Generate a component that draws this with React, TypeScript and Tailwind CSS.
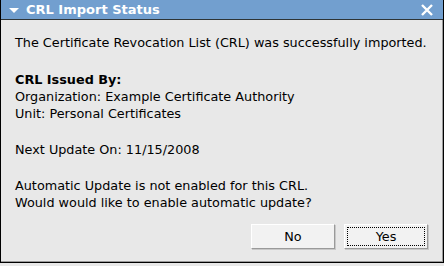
import { FC } from 'react';

const Button: FC<{ label: string; focused?: boolean }> = ({ label, focused }) => (
  <button className="w-[84px] h-[25px] bg-[#f2f2f2] border border-t-white border-l-white border-r-[#9a9a9a] border-b-[#9a9a9a] shadow-[1px_1px_0_#c8c8c8] p-[2px] text-[12.8px] text-black">
    <span
      className={`flex items-center justify-center w-full h-full ${
        focused ? 'border border-dotted border-black' : 'border border-transparent'
      }`}
    >
      {label}
    </span>
  </button>
);

export default function App() {
  return (
    <div className="w-[444px] h-[266px] bg-[#e8e8e8] font-['DejaVu_Sans',sans-serif]">
      <div className="w-[444px] h-[263px] border border-black border-t-0 flex flex-col">
        {/* TITLE BAR */}
        <div className="h-[20px] bg-[#729fcf] border-b border-[#2e3436] flex items-center pl-[7px] pr-[9px] text-white">
          <svg width="12" height="12" viewBox="0 0 12 12" className="mr-[6px]">
            <path d="M1 4h10L6 9z" fill="white" />
          </svg>
          <span className="text-[13px] font-bold leading-none">CRL Import Status</span>
          <svg width="14" height="14" viewBox="0 0 14 14" className="ml-auto">
            <path d="M2 2l10 10M12 2L2 12" stroke="white" strokeWidth="2.4" />
          </svg>
        </div>
        {/* BODY */}
        <div className="flex-1 border-r border-[#9a9a9a] pl-[14px] pt-[14px] text-[12.8px] leading-[17px] text-black">
          <p>The Certificate Revocation List (CRL) was successfully imported.</p>
          <div className="mt-[20px]">
            <p className="font-bold">CRL Issued By:</p>
            <p>Organization: Example Certificate Authority</p>
            <p>Unit: Personal Certificates</p>
          </div>
          <p className="mt-[19px]">Next Update On: 11/15/2008</p>
          <div className="mt-[19px]">
            <p>Automatic Update is not enabled for this CRL.</p>
            <p>Would would like to enable automatic update?</p>
          </div>
          <div className="flex justify-end gap-[9px] mt-[13px] pr-[14px]">
            <Button label="No" />
            <Button label="Yes" focused />
          </div>
        </div>
        <div className="h-px bg-[#9a9a9a]" />
      </div>
    </div>
  );
}
